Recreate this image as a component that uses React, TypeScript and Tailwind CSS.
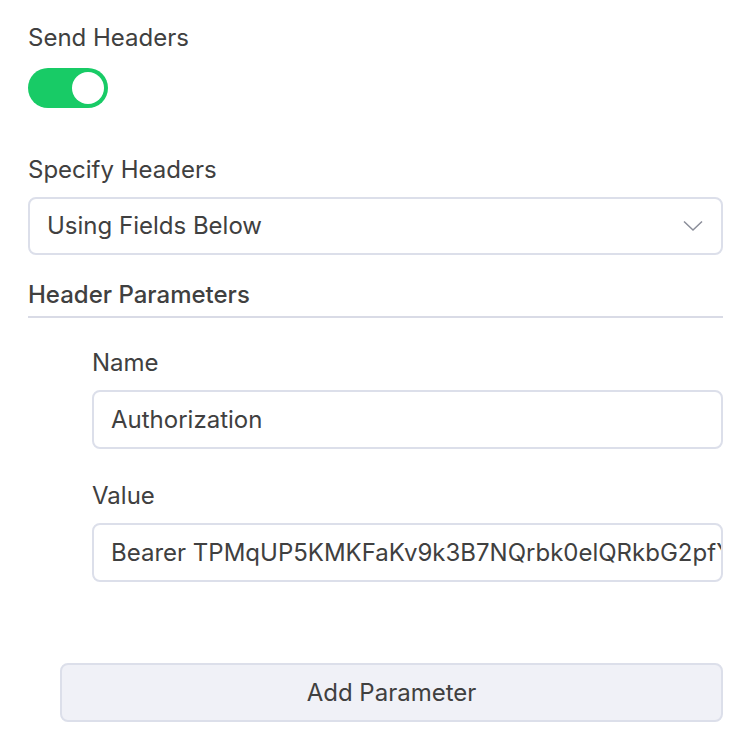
import { useState } from 'react'

function Chevron() {
    return (
        <svg width="20" height="12" viewBox="0 0 20 12" fill="none" stroke="#8a8d99" strokeWidth={1.5}>
            <path d="M1 1.5L10 10L19 1.5" />
        </svg>
    )
}

export default function App() {
    const [enabled, setEnabled] = useState(true)

    return (
        <div className="min-h-[732px] bg-white pl-[28px] pr-[31px] pt-[24px] font-['Inter',sans-serif] text-[24px] text-[#404040]">
            <div className="leading-[28px]">Send Headers</div>

            <button
                type="button"
                onClick={() => setEnabled(!enabled)}
                className={`mt-[16px] flex h-[40px] w-[80px] items-center rounded-full p-[4px] ${enabled ? 'justify-end bg-[#18cb66]' : 'justify-start bg-[#d4d6e0]'}`}
            >
                <span className="h-[32px] w-[32px] rounded-full bg-white" />
            </button>

            <div className="mt-[48px] leading-[28px]">Specify Headers</div>
            <div className="mt-[13px] flex h-[58px] items-center justify-between rounded-[8px] border-2 border-[#dcdfea] pl-[17px] pr-[18px]">
                <span>Using Fields Below</span>
                <Chevron />
            </div>

            <div className="mt-[26px] font-medium leading-[28px]">Header Parameters</div>
            <div className="mt-[7px] h-[2px] bg-[#d9dbe6]" />

            <div className="pl-[64px]">
                <div className="mt-[31px] leading-[28px]">Name</div>
                <div className="mt-[13px] flex h-[59px] items-center overflow-hidden whitespace-nowrap rounded-[8px] border-2 border-[#dcdfea] pl-[17px]">
                    Authorization
                </div>

                <div className="mt-[33px] leading-[28px]">Value</div>
                <div className="mt-[13px] flex h-[59px] items-center overflow-hidden whitespace-nowrap rounded-[8px] border-2 border-[#dcdfea] pl-[17px]">
                    Bearer TPMqUP5KMKFaKv9k3B7NQrbk0elQRkbG2pfY
                </div>
            </div>

            <div className="pl-[32px]">
                <button
                    type="button"
                    className="mt-[81px] flex h-[59px] w-full items-center justify-center rounded-[8px] border-2 border-[#dcdfea] bg-[#f0f1f7] text-[24px] text-[#404040]"
                >
                    Add Parameter
                </button>
            </div>
        </div>
    )
}
